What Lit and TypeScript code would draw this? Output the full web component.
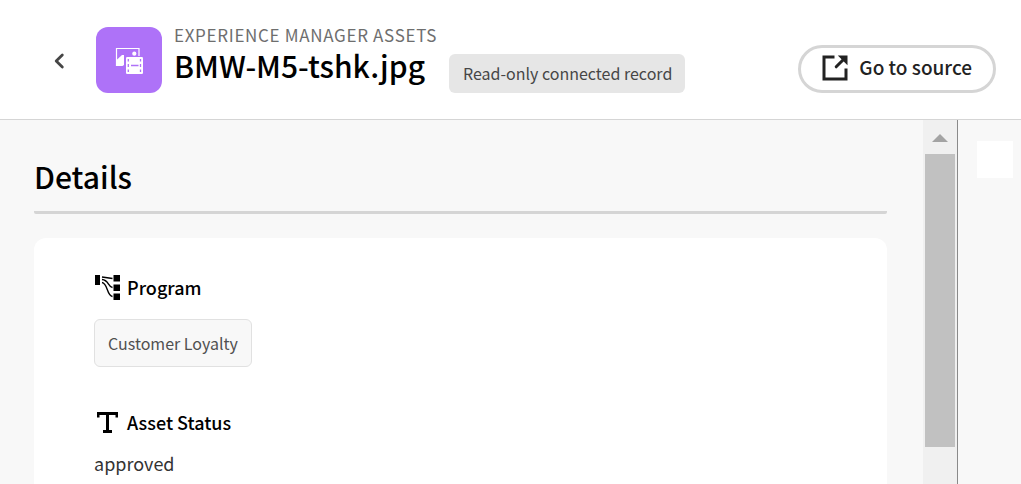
import { LitElement, html, css, svg } from "lit";
import { customElement } from "lit/decorators.js";

const backIcon = svg`<svg width="12" height="18" viewBox="0 0 12 18" aria-hidden="true">
  <path d="M9.300 3 3.200 9l6.100 6" fill="none" stroke="#464646" stroke-width="2.800" stroke-linecap="round" stroke-linejoin="round"/>
</svg>`;

const assetsIcon = svg`<svg width="30" height="30" viewBox="0 0 30 30" aria-hidden="true">
  <path d="M2.500 21V3.500h22.500V12" fill="none" stroke="#fff" stroke-width="1.200"/>
  <path d="M2 21v-5.500L8 10h2v10l-1.500 1z" fill="#fff"/>
  <circle cx="20.300" cy="8.700" r="2.100" fill="#fff"/>
  <path d="M11 11h18.500v1H12v9.500h-1z" fill="#ae72f8"/>
  <rect x="12" y="12" width="17" height="17" rx="1.200" fill="#fff"/>
  <path d="M17 20.500h7.500M14.300 14v2.500M14.300 19v3M14.300 24.500V27M26.500 14v2.500M26.500 19v3M26.500 24.500V27" stroke="#ae72f8" stroke-width="1.300" fill="none"/>
</svg>`;

const sourceIcon = svg`<svg width="26" height="26" viewBox="0 0 26 26" aria-hidden="true">
  <path d="M12.500 2H2v22h22V13.500" fill="none" stroke="#222" stroke-width="3"/>
  <path d="M15.800.500H25.500v9.700z" fill="#222"/>
  <path d="M22 4l-7.800 7.800" stroke="#222" stroke-width="3" stroke-linecap="round"/>
</svg>`;

const programIcon = svg`<svg width="27" height="26" viewBox="-1 -1 27 26" aria-hidden="true">
  <path d="M0 0h5v10H0zM18.500 0H25v6.500h-6.500zM18.500 9.500H25V16h-6.500zM18.500 18.500H25V25h-6.500z" fill="#000"/>
  <path d="M7 2l10.500 1.500M7 4.500c7 .5 5.500 7 10.500 8M7 7.500c6 1 4.500 13 10.500 14" fill="none" stroke="#000" stroke-width="1.400"/>
</svg>`;

const textIcon = svg`<svg width="27" height="26" viewBox="-1 0 27 26" aria-hidden="true">
  <path d="M2 3h21v5.500h-2.500V6H14v15h3v3H8v-3h3V6H4.500v2.500H2z" fill="#000"/>
</svg>`;

@customElement("app-root")
export class AppRoot extends LitElement {
  static styles = css`
    :host {
      display: flex;
      flex-direction: column;
      height: 100vh;
      overflow: hidden;
      background: #f8f8f8;
      color: #000;
      font-family: "Noto Sans CJK SC", "Noto Sans", sans-serif;
    }
    * { box-sizing: border-box; }
    svg { display: block; flex: none; }
    h1, h2, h3, p { margin: 0; }
    .header {
      display: flex;
      align-items: center;
      flex: none;
      height: 120px;
      padding: 0 25px 0 47px;
      background: #fff;
      border-bottom: 1px solid #d5d5d5;
    }
    .back {
      width: 24px;
      height: 32px;
      padding: 2px 0 0;
      margin-right: 25px;
      border: 0;
      background: none;
      display: grid;
      place-items: center;
    }
    .tile {
      display: grid;
      place-items: center;
      width: 66px;
      height: 66px;
      margin-right: 12px;
      border-radius: 12px;
      background: #ae72f8;
    }
    .heading { flex: 1; min-width: 0; padding-bottom: 1px; }
    .eyebrow {
      font-size: 17px;
      line-height: 20px;
      letter-spacing: 0.04em;
      color: #6e6e6e;
    }
    .title-row { display: flex; align-items: flex-start; gap: 24px; white-space: nowrap; }
    .title { font-size: 30px; line-height: 40px; font-weight: 500; }
    .chip {
      padding: 0 13px 0 14px;
      margin-top: 9px;
      border-radius: 6px;
      background: #e6e6e6;
      color: #464646;
      font-size: 16px;
      line-height: 39px;
    }
    .source {
      display: flex;
      align-items: center;
      gap: 11px;
      height: 48px;
      margin-top: 18px;
      padding: 0 21px;
      border: 3px solid #d5d5d5;
      border-radius: 24px;
      background: #fff;
      color: #222;
      font: 500 19px/24px "Noto Sans CJK SC", "Noto Sans", sans-serif;
      white-space: nowrap;
    }
    .source svg { margin-bottom: 2px; }
    .source span { padding-bottom: 3px; }
    .body { display: flex; flex: 1; min-height: 0; }
    .main { flex: 1; min-width: 0; padding: 34px 36px 0 34px; overflow: hidden; }
    .section-title {
      padding-bottom: 13px;
      border-bottom: 3px solid #d5d5d5;
      border-radius: 2px;
      font-size: 30px;
      line-height: 44px;
      font-weight: 500;
    }
    .card {
      margin-top: 24px;
      padding: 36px 60px 60px;
      border-radius: 12px;
      background: #fff;
    }
    .label {
      display: flex;
      align-items: center;
      gap: 6px;
      font-size: 18px;
      line-height: 26px;
      font-weight: 500;
    }
    .tag {
      display: inline-block;
      margin: 19px 0 42px;
      padding: 0 13px;
      border: 1px solid #e1e1e1;
      border-radius: 6px;
      background: #f8f8f8;
      color: #505050;
      font-size: 16px;
      line-height: 46px;
      vertical-align: top;
    }
    .value { margin-top: 12px; font-size: 18px; line-height: 32px; color: #333; }
    .scrollbar {
      display: flex;
      flex-direction: column;
      align-items: center;
      width: 34px;
      padding: 0 2px;
      background: #f0f0f0;
    }
    .up { height: 34px; padding: 2px 0 0; border: 0; background: none; }
    .thumb { width: 30px; height: 88.8%; background: #c1c1c1; }
    .track { flex: 1; }
    .rail {
      width: 64px;
      padding: 21px 8px 0 19px;
      border-left: 1px solid #8a8a8a;
    }
    .rail-item { display: block; width: 36px; height: 37px; padding: 0; border: 0; background: #fff; }
  `;

  render() {
    return html`
      <header class="header">
        <button class="back" aria-label="Back">${backIcon}</button>
        <div class="tile">${assetsIcon}</div>
        <div class="heading">
          <p class="eyebrow">EXPERIENCE MANAGER ASSETS</p>
          <div class="title-row">
            <h1 class="title">BMW-M5-tshk.jpg</h1>
            <span class="chip">Read-only connected record</span>
          </div>
        </div>
        <button class="source">${sourceIcon}<span>Go to source</span></button>
      </header>
      <div class="body">
        <main class="main">
          <h2 class="section-title">Details</h2>
          <section class="card">
            <h3 class="label">${programIcon}Program</h3>
            <span class="tag">Customer Loyalty</span>
            <h3 class="label">${textIcon}Asset Status</h3>
            <p class="value">approved</p>
          </section>
        </main>
        <div class="scrollbar">
          <button class="up" aria-label="Scroll up">
            <svg width="16" height="8" viewBox="0 0 16 8"><path d="M8 0l8 8H0z" fill="#a3a3a3"/></svg>
          </button>
          <div class="track"><div class="thumb"></div></div>
        </div>
        <aside class="rail"><button class="rail-item" aria-label="Open panel"></button></aside>
      </div>
    `;
  }
}
